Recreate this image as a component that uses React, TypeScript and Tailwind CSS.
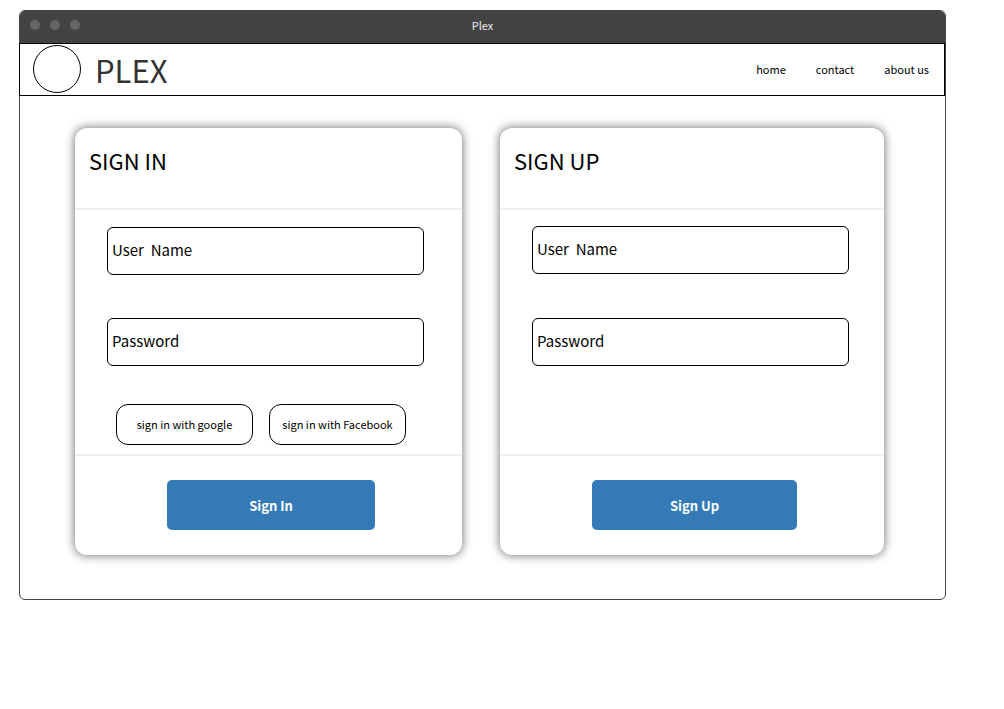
import React from "react";

function TitleBar() {
  return (
    <div className="grid h-8 grid-cols-[1fr_auto_1fr] items-center bg-[#434343] pb-1">
      <div className="flex gap-2.5 pl-2.5">
        <span className="size-2.5 rounded-full bg-[#666]" />
        <span className="size-2.5 rounded-full bg-[#666]" />
        <span className="size-2.5 rounded-full bg-[#666]" />
      </div>
      <span className="text-[11px] leading-4 text-[#eee]">Plex</span>
    </div>
  );
}

function Header() {
  return (
    <header className="-ml-px flex h-[53px] items-center justify-between border border-black pb-0.5 pl-[13px] pr-[15px]">
      <div className="flex items-center gap-3.5">
        <div className="size-12 rounded-full border border-black" />
        <h1 className="pt-0.5 text-[31px] leading-10 text-[#333]">PLEX</h1>
      </div>
      <nav className="flex gap-[30px] text-[11px] leading-4">
        <a href="#home">home</a>
        <a href="#contact">contact</a>
        <a href="#about">about us</a>
      </nav>
    </header>
  );
}

type CardProps = {
  title: string;
  action: string;
  bodyClass: string;
  children?: React.ReactNode;
};

function Field({ label, type }: { label: string; type: string }) {
  return (
    <input
      type={type}
      aria-label={label}
      placeholder={label}
      className="h-12 w-full rounded-md border border-black bg-white px-1 pb-[3px] text-[15px] text-black placeholder:text-black placeholder:opacity-100"
    />
  );
}

function Card({ title, action, bodyClass, children }: CardProps) {
  return (
    <form className="flex flex-col rounded-xl bg-white shadow-[0_0_10px_1px_rgba(0,0,0,0.5)]">
      <div className="h-[82px] border-b-2 border-[#f0f0f0] px-3.5 pt-4">
        <h2 className="text-[22px] leading-8">{title}</h2>
      </div>
      <div className={"flex h-[244px] flex-col " + bodyClass}>
        <Field label="User  Name" type="text" />
        <Field label="Password" type="password" />
        {children}
      </div>
      <div className="border-t-2 border-[#f0f0f0] pb-[25px] pl-[92px] pr-[87px] pt-6">
        <button
          type="button"
          className="block h-[50px] w-full rounded-[5px] bg-[#337ab7] pt-0.5 text-[13px] font-bold text-white"
        >
          {action}
        </button>
      </div>
    </form>
  );
}

function SocialButton({ children }: { children: React.ReactNode }) {
  return (
    <button
      type="button"
      className="h-[41px] flex-1 whitespace-nowrap rounded-xl border border-black bg-white text-[11px]"
    >
      {children}
    </button>
  );
}

export default function App() {
  return (
    <div className="pb-8 pl-[19px] pr-[58px] pt-2.5 font-['Noto_Sans_CJK_SC','Noto_Sans',sans-serif] text-black">
      <div className="rounded-md border border-[#434343] bg-white">
        <div className="overflow-hidden rounded-t-[5px]">
          <TitleBar />
        </div>
        <Header />
        <main className="grid grid-cols-[387fr_384fr] gap-[38px] pb-11 pl-[55px] pr-[61px] pt-8">
          <Card title="SIGN IN" action="Sign In" bodyClass="gap-[43px] pl-8 pr-[38px] pt-[17px]">
            <div className="-mt-[5px] flex gap-4 pl-[9px] pr-[18px]">
              <SocialButton>sign in with google</SocialButton>
              <SocialButton>sign in with Facebook</SocialButton>
            </div>
          </Card>
          <Card title="SIGN UP" action="Sign Up" bodyClass="gap-11 pl-8 pr-[35px] pt-4" />
        </main>
      </div>
    </div>
  );
}
